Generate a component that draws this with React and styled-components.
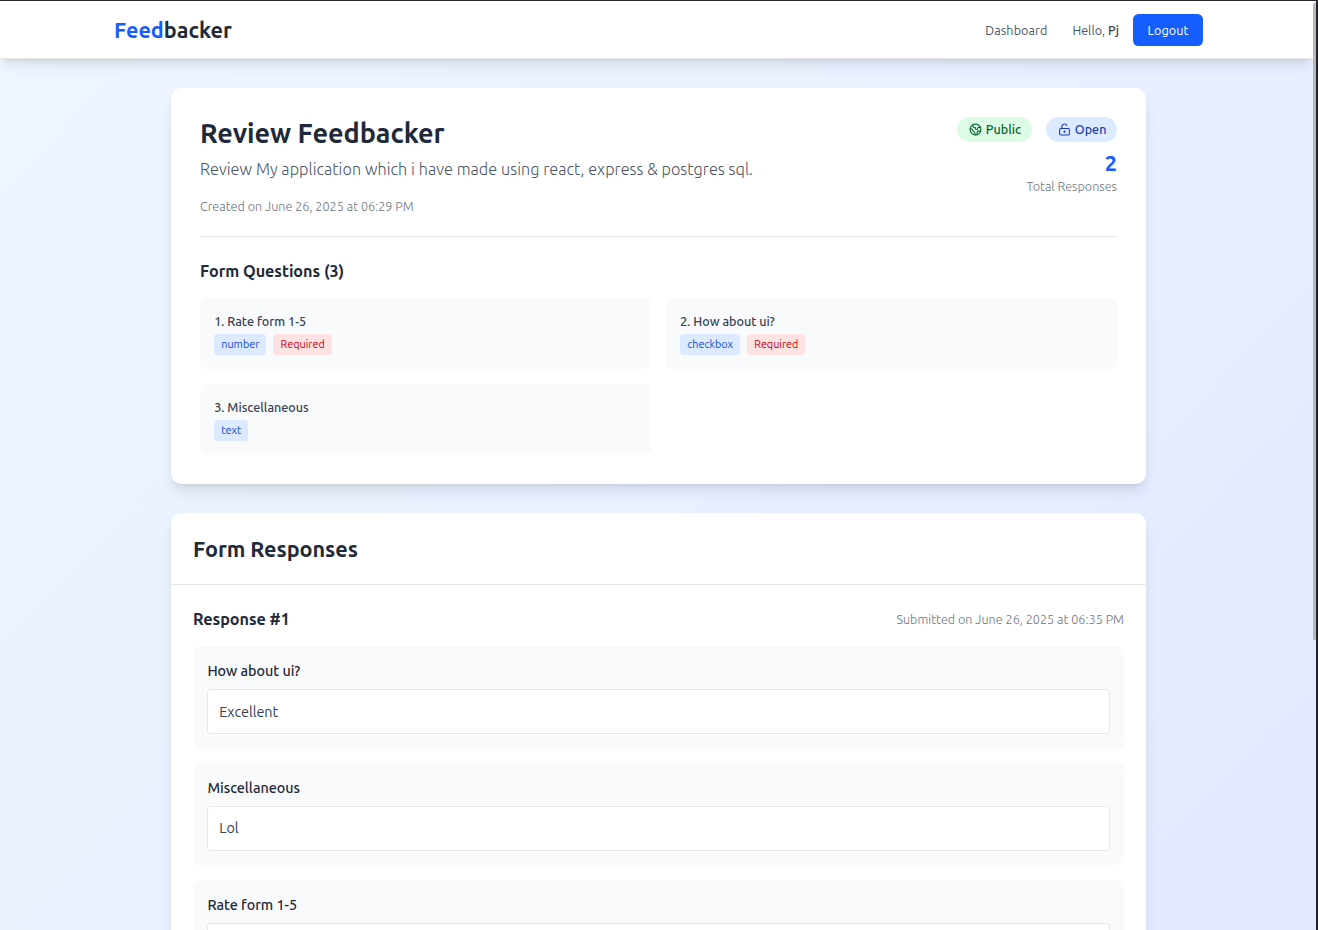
import React from "react";
import styled, { createGlobalStyle } from "styled-components";
import { Earth, LockKeyholeOpen } from "lucide-react";

const Global = createGlobalStyle`
  *, *::before, *::after { box-sizing: border-box; }
  body { margin: 0; overflow: hidden; font-family: Ubuntu, "Open Sans", "Noto Sans", sans-serif; }
  h1, h2, h3, p { margin: 0; }
`;

const Frame = styled.div`
  display: flex;
  height: 930px;
  overflow: hidden;
  border-top: 1px solid #2b2a33;
  border-right: 2px solid #242329;
`;

const Page = styled.div`
  flex: 1;
  height: 1358px;
  background: linear-gradient(to bottom right in oklab, #eff6ff, #e0e7ff);
`;

const Scrollbar = styled.div`
  width: 3px;
  height: 637px;
  margin: 2px 0 0 -3px;
  background: #b9b9b9;
  border-radius: 2px;
  z-index: 2;
`;

const Header = styled.header`
  display: flex;
  align-items: center;
  justify-content: space-between;
  height: 58px;
  margin-right: 2px;
  padding: 0 111px 0 114px;
  background: #fff;
  border-bottom: 1px solid #e5e7eb;
  box-shadow: 0 9px 13.5px -2.7px rgba(0, 0, 0, 0.1), 0 3.6px 5.4px -3.6px rgba(0, 0, 0, 0.1);
`;

const Logo = styled.div`
  padding-top: 2px;
  font-size: 21.6px;
  font-weight: 600;
  line-height: 29px;
  color: #1e2939;
  span { color: #155dfc; }
`;

const Nav = styled.nav`
  display: flex;
  align-items: center;
  font-size: 12.6px;
  line-height: 18px;
  color: #4a5565;
`;

const NavLink = styled.a`
  margin-right: 25px;
  letter-spacing: 0.08px;
`;

const Greeting = styled.span`
  margin-right: 14px;
  b { font-weight: 500; color: #364153; }
`;

const LogoutButton = styled.button`
  width: 70px;
  height: 32px;
  padding: 0;
  border: 0;
  border-radius: 5.4px;
  background: #155dfc;
  color: #fff;
  font: inherit;
  letter-spacing: 0.08px;
`;

const Main = styled.main`
  display: flex;
  flex-direction: column;
  gap: 29px;
  width: 975px;
  margin: 29px 0 0 171px;
`;

const Card = styled.section`
  background: #fff;
  border-radius: 10.8px;
  box-shadow: 0 9px 13.5px -2.7px rgba(0, 0, 0, 0.1), 0 3.6px 5.4px -3.6px rgba(0, 0, 0, 0.1);
`;

const Overview = styled(Card)`
  height: 396px;
  padding: 29px;
`;

const OverviewTop = styled.div`
  display: flex;
  justify-content: space-between;
  height: 120px;
  border-bottom: 1px solid #e5e7eb;
`;

const Title = styled.h1`
  font-size: 27px;
  font-weight: 600;
  line-height: 32px;
  letter-spacing: -0.03px;
  color: #1e2939;
`;

const Description = styled.p`
  margin-top: 8px;
  font-size: 16.2px;
  font-weight: 300;
  line-height: 25px;
  letter-spacing: 0.063px;
  color: #4a5565;
`;

const Muted = styled.p`
  font-size: 12.6px;
  font-weight: 300;
  line-height: 18px;
  letter-spacing: 0.02px;
  color: #6a7282;
`;

const Created = styled(Muted)`
  margin-top: 15px;
`;

const Stats = styled.div`
  display: flex;
  flex-direction: column;
  align-items: flex-end;
`;

const Statuses = styled.div`
  display: flex;
  gap: 14px;
`;

const tones = {
  green: { bg: "#dcfce7", fg: "#016630" },
  blue: { bg: "#dbeafe", fg: "#193cb8" },
};

const Status = styled.span`
  display: flex;
  align-items: center;
  gap: 4px;
  width: ${(p) => p.$width}px;
  height: 25px;
  padding: 0 0 1px 11.8px;
  border-radius: 13px;
  font-size: 12.6px;
  font-weight: 500;
  line-height: 18px;
  background: ${(p) => tones[p.$tone].bg};
  color: ${(p) => tones[p.$tone].fg};
`;

const Count = styled.div`
  margin-top: 7px;
  font-size: 21.6px;
  font-weight: 700;
  line-height: 29px;
  color: #155dfc;
`;

const Total = styled(Muted)`
  margin-top: -1px;
`;

const Heading = styled.h2`
  font-size: ${(p) => (p.$large ? 21.6 : 16.2)}px;
  font-weight: 600;
  line-height: ${(p) => (p.$large ? 29 : 25)}px;
  letter-spacing: -0.04px;
  color: #1e2939;
`;

const QuestionsHeading = styled(Heading)`
  margin: 22px 0 14px;
`;

const QuestionGrid = styled.div`
  display: grid;
  grid-template-columns: 1fr 1fr;
  gap: 15px;
`;

const Question = styled.div`
  height: 71px;
  padding: 14px 14.2px;
  border-radius: 7.2px;
  background: #f9fafb;
`;

const QuestionTitle = styled.p`
  font-size: 12.6px;
  font-weight: 500;
  line-height: 18px;
  color: #364153;
`;

const Tags = styled.div`
  display: flex;
  gap: 7.1px;
  margin-top: 4px;
`;

const Tag = styled.span`
  padding: 0 7.1px;
  border-radius: 3.6px;
  font-size: 10.8px;
  line-height: 21px;
  background: ${(p) => (p.$required ? "#ffe2e2" : "#dbeafe")};
  color: ${(p) => (p.$required ? "#c10007" : "#1447e6")};
`;

const ResponsesHeader = styled.div`
  padding: 22px 22px 20px;
  border-bottom: 1px solid #e5e7eb;
`;

const Response = styled.div`
  padding: 22px;
`;

const ResponseTop = styled.div`
  display: flex;
  align-items: flex-start;
  justify-content: space-between;
  ${Muted} { margin-top: 3px; }
`;

const Answers = styled.div`
  display: flex;
  flex-direction: column;
  gap: 14.4px;
  margin-top: 14.2px;
`;

const Answer = styled.div`
  padding: 14.4px;
  border-radius: 7.2px;
  background: #f9fafb;
`;

const AnswerLabel = styled.p`
  padding-top: 0.8px;
  font-size: 14.4px;
  font-weight: 500;
  line-height: 21.6px;
  letter-spacing: -0.03px;
  color: #1e2939;
`;

const AnswerValue = styled.div`
  height: 45px;
  margin-top: 6.2px;
  padding: 11.4px 10.8px 0;
  border: 1px solid #e5e7eb;
  border-radius: 3.6px;
  background: #fff;
  font-size: 14.4px;
  line-height: 21.6px;
  letter-spacing: -0.03px;
  color: #364153;
`;

const questions = [
  { title: "1. Rate form 1-5", type: "number", required: true },
  { title: "2. How about ui?", type: "checkbox", required: true },
  { title: "3. Miscellaneous", type: "text" },
];

const answers = [
  { label: "How about ui?", value: "Excellent" },
  { label: "Miscellaneous", value: "Lol" },
  { label: "Rate form 1-5", value: "" },
];

export default function App() {
  return (
    <Frame>
      <Global />
      <Page>
        <Header>
          <Logo><span>Feed</span>backer</Logo>
          <Nav>
            <NavLink>Dashboard</NavLink>
            <Greeting>Hello, <b>Pj</b></Greeting>
            <LogoutButton>Logout</LogoutButton>
          </Nav>
        </Header>
        <Main>
          <Overview>
            <OverviewTop>
              <div>
                <Title>Review Feedbacker</Title>
                <Description>Review My application which i have made using react, express &amp; postgres sql.</Description>
                <Created>Created on June 26, 2025 at 06:29 PM</Created>
              </div>
              <Stats>
                <Statuses>
                  <Status $tone="green" $width={75}><Earth size={13} />Public</Status>
                  <Status $tone="blue" $width={71}><LockKeyholeOpen size={13} />Open</Status>
                </Statuses>
                <Count>2</Count>
                <Total>Total Responses</Total>
              </Stats>
            </OverviewTop>
            <QuestionsHeading>Form Questions (3)</QuestionsHeading>
            <QuestionGrid>
              {questions.map((q) => (
                <Question key={q.title}>
                  <QuestionTitle>{q.title}</QuestionTitle>
                  <Tags>
                    <Tag>{q.type}</Tag>
                    {q.required && <Tag $required>Required</Tag>}
                  </Tags>
                </Question>
              ))}
            </QuestionGrid>
          </Overview>
          <Card>
            <ResponsesHeader>
              <Heading $large>Form Responses</Heading>
            </ResponsesHeader>
            <Response>
              <ResponseTop>
                <Heading as="h3">Response #1</Heading>
                <Muted>Submitted on June 26, 2025 at 06:35 PM</Muted>
              </ResponseTop>
              <Answers>
                {answers.map((a) => (
                  <Answer key={a.label}>
                    <AnswerLabel>{a.label}</AnswerLabel>
                    <AnswerValue>{a.value}</AnswerValue>
                  </Answer>
                ))}
              </Answers>
            </Response>
          </Card>
        </Main>
      </Page>
      <Scrollbar />
    </Frame>
  );
}
